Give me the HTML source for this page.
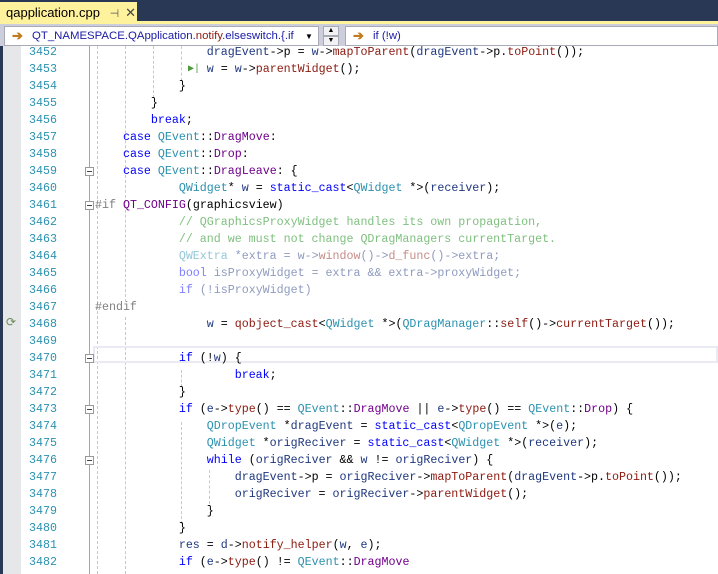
<!DOCTYPE html><html><head><style>
*{margin:0;padding:0;box-sizing:border-box}
body{width:718px;height:574px;overflow:hidden;background:#fff;position:relative;font-family:"Liberation Sans",sans-serif}
.top{position:absolute;left:0;top:0;width:718px;height:22px;background:#293955}
.tab{position:absolute;left:0;top:2px;width:137px;height:21px;background:#fff29d;font-size:13px;color:#000;padding:3px 0 0 6px;white-space:nowrap;overflow:hidden}
.yl{position:absolute;left:0;top:21px;width:718px;height:3px;background:#fff29d}
.bar{position:absolute;left:0;top:24px;width:718px;height:22px;background:#cccedb;z-index:5}
.dd{position:absolute;top:2px;height:20px;background:#fff;border:1px solid #a8abb5;font-size:11.4px;padding:3px 0 0 27px;color:#1a1aa6;white-space:nowrap;overflow:hidden}
.arr{position:absolute;left:7px;top:1px;color:#c17b1c;font-weight:bold;font-size:13px}
.sb{position:absolute;left:323px;width:16px;height:10px;background:#f2f2f5;border:1px solid #a8abb5;font-size:7px;text-align:center;line-height:8px}
.gut{position:absolute;left:0;top:46px;width:3px;height:528px;background:#293955}
.gut2{position:absolute;left:3px;top:46px;width:18px;height:528px;background:#e6e7e8}
.code{position:absolute;left:0;top:44px;width:718px}
.r{position:absolute;left:0;height:17px;width:718px;font-family:"Liberation Mono",monospace;font-size:11.65px;line-height:17px;white-space:pre}
.n{position:absolute;left:20px;width:37px;text-align:right;color:#2b91af}
.t{position:absolute;left:95px;color:#000}
.ol{position:absolute;left:89px;top:46px;width:1px;height:528px;background:#a5a5a5}
.g{position:absolute;width:0;border-left:1px dashed #c8c8c8}
.fm{position:absolute;left:85px;width:9px;height:9px;border:1px solid #999;background:#fff;z-index:2}
.fm:after{content:"";position:absolute;left:1px;top:3px;width:5px;height:1px;background:#444}
.k{color:#0000ff}.ty{color:#2b91af}.f{color:#8b1a10}.e{color:#6f008a}.v{color:#1f377f}.c{color:#008000}.pp{color:#808080}
.ik{color:#8080ff}.it{color:#95c8d8}.iv{color:#8f9bbf}.if{color:#c58d88}.ip{color:#999}
</style></head><body>
<div class="top"></div>
<div class="tab">qapplication.cpp <span style="color:#555;font-size:11px;margin-left:6px">⊣</span><span style="color:#444;margin-left:6px">✕</span></div>
<div class="yl"></div>
<div class="bar">
<div class="dd" style="left:4px;width:315px"><span class="arr">➔</span>QT_NAMESPACE.QApplication.<span style="color:#8b1a10">notify</span>.elseswitch.{.if<span style="position:absolute;right:0;top:0;width:16px;height:18px;background:#fff;color:#000;font-size:8px;padding:5px 0 0 3px">▼</span></div>
<div class="sb" style="top:2px">▲</div><div class="sb" style="top:12px">▼</div>
<div class="dd" style="left:345px;width:373px"><span class="arr">➔</span>if (!w)</div>
</div>
<div class="gut"></div><div class="gut2"></div>
<div class="ol"></div>
<div class="g" style="left:97px;top:46px;height:528px"></div>
<div class="g" style="left:125px;top:46px;height:256px"></div>
<div class="g" style="left:125px;top:317px;height:257px"></div>
<div class="g" style="left:153px;top:46px;height:52px"></div>
<div class="g" style="left:181px;top:46px;height:35px"></div>
<div class="g" style="left:181px;top:370px;height:17px"></div>
<div class="g" style="left:181px;top:422px;height:102px"></div>
<div class="g" style="left:209px;top:470px;height:34px"></div>
<div style="position:absolute;left:93px;top:346px;width:625px;height:17px;border:2px solid #eaeaf2"></div>
<div class="fm" style="top:167px"></div><div class="fm" style="top:201px"></div><div class="fm" style="top:354px"></div><div class="fm" style="top:405px"></div><div class="fm" style="top:456px"></div>
<div style="position:absolute;left:6px;top:315px;color:#6c8a5a;font-size:12px">⟳</div>
<div class="code">
<div class="r" style="top:0"><span class="n">3452</span><span class="t">                <span class="v">dragEvent</span>-&gt;p = <span class="v">w</span>-&gt;<span class="f">mapToParent</span>(<span class="v">dragEvent</span>-&gt;p.<span class="f">toPoint</span>());</span></div>
<div class="r" style="top:17px"><span class="n">3453</span><span style="position:absolute;left:188px;color:#4a9a3a;font-size:10px">▶|</span><span class="t">                <span class="v">w</span> = <span class="v">w</span>-&gt;<span class="f">parentWidget</span>();</span></div>
<div class="r" style="top:34px"><span class="n">3454</span><span class="t">            }</span></div>
<div class="r" style="top:51px"><span class="n">3455</span><span class="t">        }</span></div>
<div class="r" style="top:68px"><span class="n">3456</span><span class="t">        <span class="k">break</span>;</span></div>
<div class="r" style="top:85px"><span class="n">3457</span><span class="t">    <span class="k">case</span> <span class="ty">QEvent</span>::<span class="e">DragMove</span>:</span></div>
<div class="r" style="top:102px"><span class="n">3458</span><span class="t">    <span class="k">case</span> <span class="ty">QEvent</span>::<span class="e">Drop</span>:</span></div>
<div class="r" style="top:119px"><span class="n">3459</span><span class="t">    <span class="k">case</span> <span class="ty">QEvent</span>::<span class="e">DragLeave</span>: {</span></div>
<div class="r" style="top:136px"><span class="n">3460</span><span class="t">            <span class="ty">QWidget</span>* <span class="v">w</span> = <span class="k">static_cast</span>&lt;<span class="ty">QWidget</span> *&gt;(<span class="v">receiver</span>);</span></div>
<div class="r" style="top:153px"><span class="n">3461</span><span class="t"><span class="pp">#if</span> <span class="e">QT_CONFIG</span>(graphicsview)</span></div>
<div class="r" style="top:170px"><span class="n">3462</span><span class="t">            <span style="color:#7fc07f">// QGraphicsProxyWidget handles its own propagation,</span></span></div>
<div class="r" style="top:187px"><span class="n">3463</span><span class="t">            <span style="color:#7fc07f">// and we must not change QDragManagers currentTarget.</span></span></div>
<div class="r" style="top:204px"><span class="n">3464</span><span class="t">            <span class="it">QWExtra</span> <span class="iv">*extra = w-&gt;</span><span class="if">window</span><span class="iv">()-&gt;</span><span class="if">d_func</span><span class="iv">()-&gt;extra;</span></span></div>
<div class="r" style="top:221px"><span class="n">3465</span><span class="t">            <span class="ik">bool</span> <span class="iv">isProxyWidget = extra &amp;&amp; extra-&gt;proxyWidget;</span></span></div>
<div class="r" style="top:238px"><span class="n">3466</span><span class="t">            <span class="ik">if</span> <span class="iv">(!isProxyWidget)</span></span></div>
<div class="r" style="top:255px"><span class="n">3467</span><span class="t"><span class="pp">#endif</span></span></div>
<div class="r" style="top:272px"><span class="n">3468</span><span class="t">                <span class="v">w</span> = <span class="f">qobject_cast</span>&lt;<span class="ty">QWidget</span> *&gt;(<span class="ty">QDragManager</span>::<span class="f">self</span>()-&gt;<span class="f">currentTarget</span>());</span></div>
<div class="r" style="top:289px"><span class="n">3469</span></div>
<div class="r" style="top:306px"><span class="n">3470</span><span class="t">            <span class="k">if</span> (!<span class="v">w</span>) {</span></div>
<div class="r" style="top:323px"><span class="n">3471</span><span class="t">                    <span class="k">break</span>;</span></div>
<div class="r" style="top:340px"><span class="n">3472</span><span class="t">            }</span></div>
<div class="r" style="top:357px"><span class="n">3473</span><span class="t">            <span class="k">if</span> (<span class="v">e</span>-&gt;<span class="f">type</span>() == <span class="ty">QEvent</span>::<span class="e">DragMove</span> || <span class="v">e</span>-&gt;<span class="f">type</span>() == <span class="ty">QEvent</span>::<span class="e">Drop</span>) {</span></div>
<div class="r" style="top:374px"><span class="n">3474</span><span class="t">                <span class="ty">QDropEvent</span> *<span class="v">dragEvent</span> = <span class="k">static_cast</span>&lt;<span class="ty">QDropEvent</span> *&gt;(<span class="v">e</span>);</span></div>
<div class="r" style="top:391px"><span class="n">3475</span><span class="t">                <span class="ty">QWidget</span> *<span class="v">origReciver</span> = <span class="k">static_cast</span>&lt;<span class="ty">QWidget</span> *&gt;(<span class="v">receiver</span>);</span></div>
<div class="r" style="top:408px"><span class="n">3476</span><span class="t">                <span class="k">while</span> (<span class="v">origReciver</span> &amp;&amp; <span class="v">w</span> != <span class="v">origReciver</span>) {</span></div>
<div class="r" style="top:425px"><span class="n">3477</span><span class="t">                    <span class="v">dragEvent</span>-&gt;p = <span class="v">origReciver</span>-&gt;<span class="f">mapToParent</span>(<span class="v">dragEvent</span>-&gt;p.<span class="f">toPoint</span>());</span></div>
<div class="r" style="top:442px"><span class="n">3478</span><span class="t">                    <span class="v">origReciver</span> = <span class="v">origReciver</span>-&gt;<span class="f">parentWidget</span>();</span></div>
<div class="r" style="top:459px"><span class="n">3479</span><span class="t">                }</span></div>
<div class="r" style="top:476px"><span class="n">3480</span><span class="t">            }</span></div>
<div class="r" style="top:493px"><span class="n">3481</span><span class="t">            <span class="v">res</span> = <span class="v">d</span>-&gt;<span class="f">notify_helper</span>(<span class="v">w</span>, <span class="v">e</span>);</span></div>
<div class="r" style="top:510px"><span class="n">3482</span><span class="t">            <span class="k">if</span> (<span class="v">e</span>-&gt;<span class="f">type</span>() != <span class="ty">QEvent</span>::<span class="e">DragMove</span></span></div>
</div>
</body></html>
